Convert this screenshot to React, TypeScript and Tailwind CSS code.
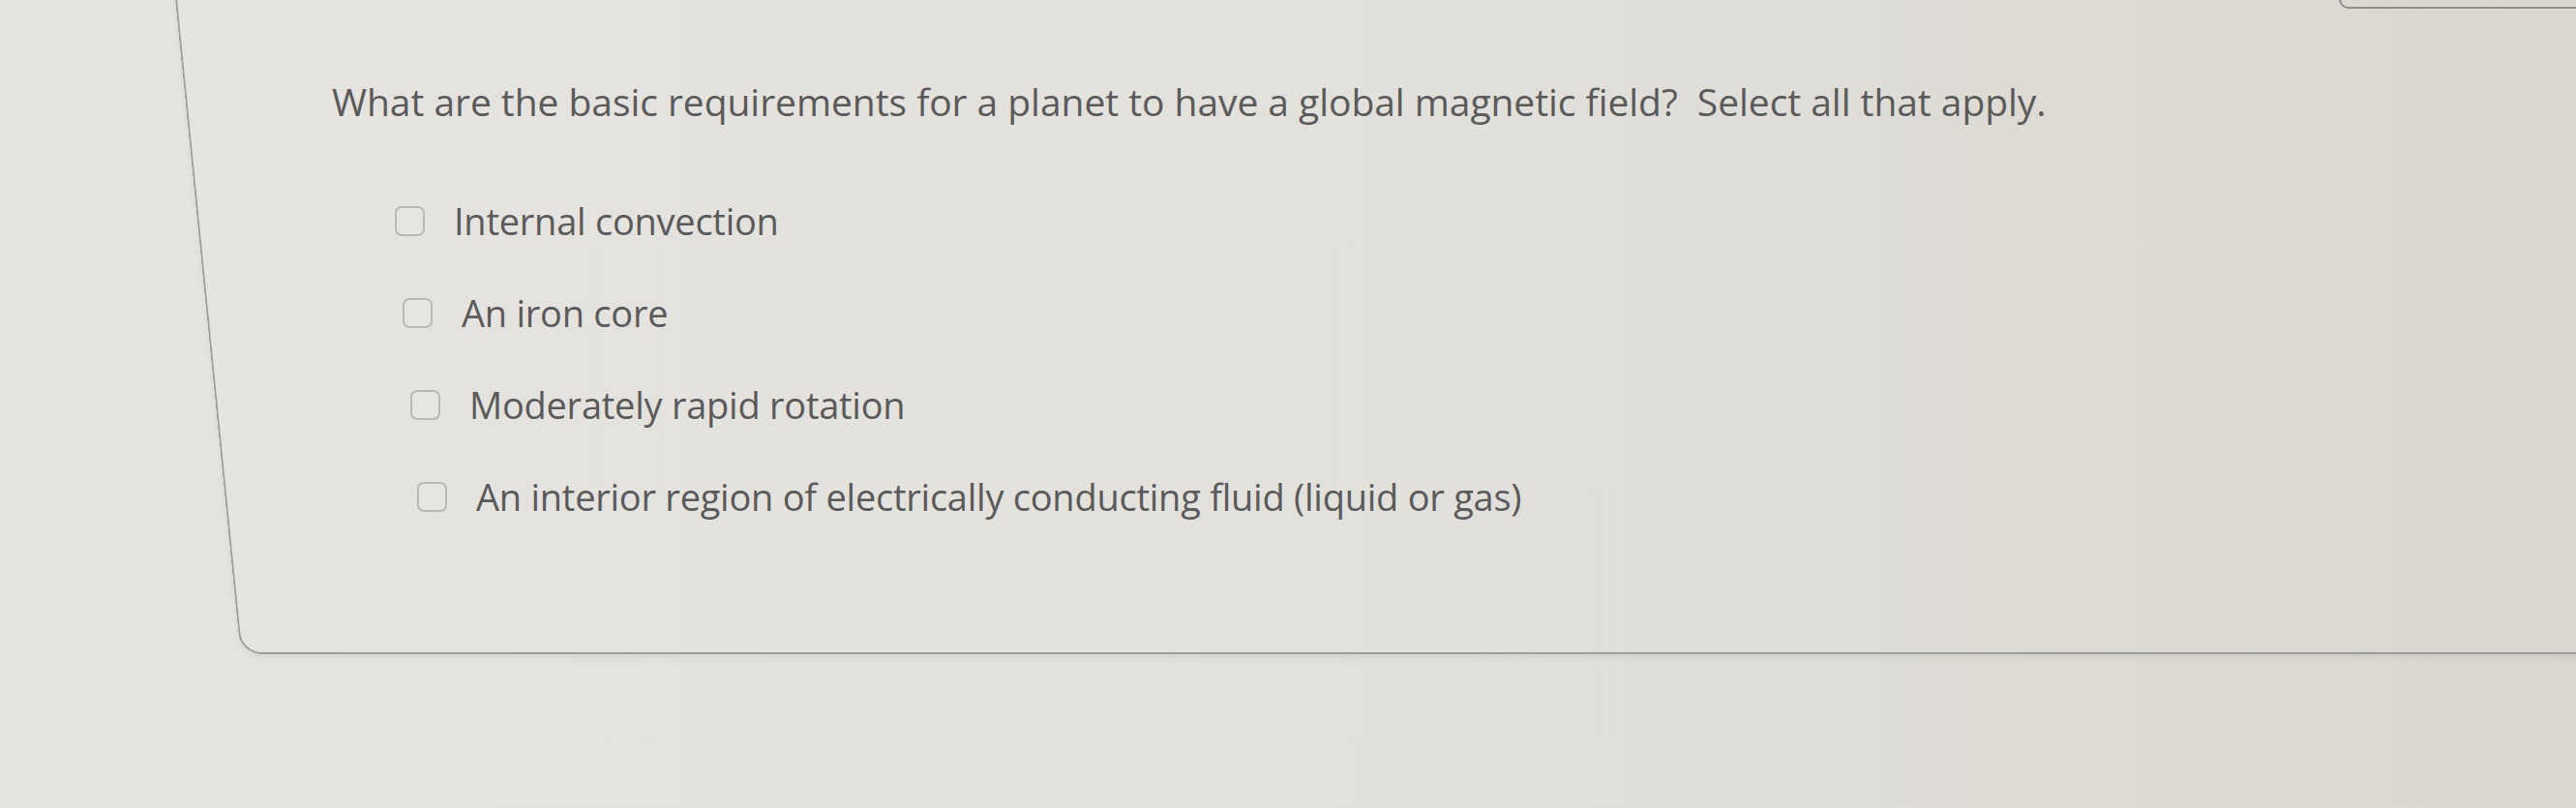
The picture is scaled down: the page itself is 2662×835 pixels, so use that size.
import React from "react";

const options = [
  { label: "Internal convection", pl: "pl-[225px]" },
  { label: "An iron core", pl: "pl-[233px]" },
  { label: "Moderately rapid rotation", pl: "pl-[241px]" },
  { label: "An interior region of electrically conducting fluid (liquid or gas)", pl: "pl-[248px]" },
];

export default function App() {
  return (
    <div
      className="relative w-[2662px] h-[835px] overflow-hidden bg-gradient-to-r from-[#e6e4e0] via-[#e3e1dc] to-[#d9d7cf] text-[#5a5a5a]"
      style={{ fontFamily: '"Open Sans", "Noto Sans", sans-serif' }}
    >
      <div className="absolute left-[2417px] top-[-22px] w-[300px] h-[31px] rounded-[10px] border-2 border-[#8f8f8f]" />
      <div className="ml-[181px] w-[2600px] h-[676px] border-l-2 border-b-2 border-[#9d9d9b] rounded-bl-[22px] origin-top-left skew-x-[5.7deg] shadow-[0_4px_6px_rgba(0,0,0,0.06)]">
        <div className="origin-top-left -skew-x-[5.7deg] pt-[79px]">
          <p className="pl-[160px] text-[39px] leading-[52px] tracking-[-0.05px] whitespace-nowrap">
            What are the basic requirements for a planet to have a global magnetic field?&nbsp; Select all that apply.
          </p>
          <div className="mt-[71px] flex flex-col gap-[43px]">
            {options.map((o) => (
              <label key={o.label} className={`flex items-center h-[52px] ${o.pl}`}>
                <span className="w-[31px] h-[31px] rounded-[7px] border-2 border-[#b8b8b6] bg-[#e7e5e1] shrink-0" />
                <span className="ml-[30px] text-[38px] leading-[52px] tracking-[-0.25px] whitespace-nowrap">{o.label}</span>
              </label>
            ))}
          </div>
        </div>
      </div>
    </div>
  );
}
